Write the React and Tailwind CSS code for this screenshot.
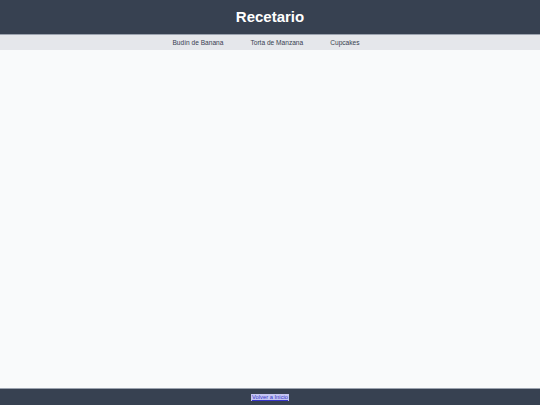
import React from "react";

export default function App() {
  const recetas = ["Budín de Banana", "Torta de Manzana", "Cupcakes"];

  return (
    <div
      className="flex h-[405px] flex-col bg-[#f9fafb]"
      style={{ fontFamily: '"Liberation Sans", Arial, sans-serif' }}
    >
      <header className="flex h-[35px] items-center justify-center border-b border-[#9ca3af] bg-[#374151] pt-[1px]">
        <h1 className="text-[15px] font-bold text-white">Recetario</h1>
      </header>

      <nav className="flex h-[15px] items-center justify-center gap-[27px] bg-[#e5e7eb] pr-[8px]">
        {recetas.map((r) => (
          <span key={r} className="text-[6.6px] text-[#374151]">
            {r}
          </span>
        ))}
      </nav>

      <main className="flex-1"></main>

      <footer className="flex h-[17px] items-center justify-center border-t border-[#9ca3af] bg-[#374151]">
        <a href="#" className="bg-[#c5c5f2] px-px text-[5.8px] leading-[7px] text-[#3535c8] underline">
          Volver a Inicio
        </a>
      </footer>
    </div>
  );
}
